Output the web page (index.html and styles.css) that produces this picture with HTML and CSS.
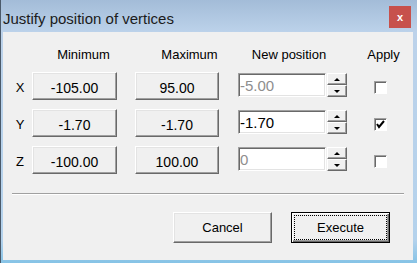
FILE: index.html
```html
<!DOCTYPE html>
<html lang="en">
<head>
    <meta charset="UTF-8">
    <title>Justify position of vertices</title>
    <link rel="stylesheet" href="styles.css">
</head>
<body>

<div class="window">
    <div class="titlebar">
        <span class="title">Justify position of vertices</span>
        <span class="close">x</span>
    </div>
    <div class="panel">
        <div class="grid">
            <span></span>
            <span class="head">Minimum</span>
            <span class="head head-max">Maximum</span>
            <span class="head head-new">New position</span>
            <span class="head head-apply">Apply</span>

            <span class="axis">X</span>
            <button class="value">-105.00</button>
            <button class="value">95.00</button>
            <div class="spin-field">
                <input type="text" value="-5.00" class="dim" disabled>
                <div class="spinner">
                    <span class="spin-btn"><span class="arrow-up"></span></span>
                    <span class="spin-btn"><span class="arrow-down"></span></span>
                </div>
            </div>
            <span class="check"></span>

            <span class="axis">Y</span>
            <button class="value">-1.70</button>
            <button class="value">-1.70</button>
            <div class="spin-field">
                <input type="text" value="-1.70">
                <div class="spinner">
                    <span class="spin-btn"><span class="arrow-up"></span></span>
                    <span class="spin-btn"><span class="arrow-down"></span></span>
                </div>
            </div>
            <span class="check">
                <svg width="11" height="11" viewBox="0 0 11 11"><polyline points="2,5 4,8 9,2" fill="none" stroke="#000" stroke-width="2"/></svg>
            </span>

            <span class="axis">Z</span>
            <button class="value">-100.00</button>
            <button class="value">100.00</button>
            <div class="spin-field">
                <input type="text" value="0" class="dim" disabled>
                <div class="spinner">
                    <span class="spin-btn"><span class="arrow-up"></span></span>
                    <span class="spin-btn"><span class="arrow-down"></span></span>
                </div>
            </div>
            <span class="check"></span>
        </div>

        <hr class="separator">

        <div class="actions">
            <button class="btn">Cancel</button>
            <button class="btn default">Execute</button>
        </div>
    </div>
</div>

</body>
</html>
```

FILE: styles.css
```css
body {
    margin: 0;
    font-family: "Liberation Sans", Arial, sans-serif;
}
.window {
    width: 417px;
    height: 263px;
    box-sizing: border-box;
    border-left: 1px solid #4b5a6a;
    padding: 0 4px 3px 2px;
    background: linear-gradient(#a3bcd8, #bcd2ea 32px, #b4d2ec 240px, #86c3e6);
    display: flex;
    flex-direction: column;
}
.titlebar {
    height: 32px;
    display: flex;
    justify-content: space-between;
    align-items: flex-start;
}
.title {
    font-size: 15px;
    line-height: 18px;
    margin-top: 10px;
    color: #1b1b1b;
}
.close {
    width: 22px;
    height: 22px;
    margin-top: 6px;
    margin-right: 2px;
    background-color: #c7514c;
    color: #fff;
    font-weight: bold;
    font-size: 11px;
    display: flex;
    align-items: center;
    justify-content: center;
}
.panel {
    flex: 1;
    background-color: #f0f0f0;
}
.grid {
    display: grid;
    grid-template-columns: 29px 103px 103px 109px 1fr;
    grid-template-rows: 16px 28px 28px 28px;
    row-gap: 9px;
    padding-top: 15px;
}
.head {
    font-size: 13px;
    line-height: 16px;
    text-align: center;
}
.head-max {
    padding-left: 6px;
}
.head-new {
    padding-right: 7px;
}
.head-apply {
    padding-left: 7px;
}
.axis {
    font-size: 13px;
    padding: 3px 0 0 5px;
    text-align: center;
    align-self: center;
}
.value,
.btn {
    font-family: inherit;
    margin: 0;
    box-sizing: border-box;
    background-color: #f0f0f0;
    color: #000;
    border: 1px solid;
    border-color: #fff #696969 #696969 #fff;
    box-shadow: inset -1px -1px #a0a0a0, inset 1px 1px #e3e3e3;
}
.value {
    width: 85px;
    height: 28px;
    font-size: 14px;
    padding: 4px 0 0;
}
.grid .value:nth-child(5n+3) {
    width: 84px;
}
.spin-field {
    display: flex;
    align-items: flex-start;
    padding-top: 1px;
}
.spin-field input {
    width: 88px;
    height: 24px;
    box-sizing: border-box;
    margin: 0;
    padding: 1px 0 0 1px;
    font-family: inherit;
    font-size: 15px;
    color: #000;
    background-color: #fff;
    border: 1px solid;
    border-color: #a0a0a0 #fff #fff #a0a0a0;
    box-shadow: inset 1px 1px #696969, inset -1px -1px #e3e3e3;
    outline: none;
}
.spin-field input.dim {
    color: #8e8e8e;
}
.spinner {
    display: flex;
    flex-direction: column;
    width: 20px;
    margin-left: 1px;
}
.spin-btn {
    height: 12px;
    box-sizing: border-box;
    border: 1px solid;
    border-color: #fff #696969 #696969 #fff;
    box-shadow: inset -1px -1px #a0a0a0;
    display: flex;
    align-items: center;
    justify-content: center;
}
.arrow-up {
    border-left: 3px solid transparent;
    border-right: 3px solid transparent;
    border-bottom: 3px solid #000;
}
.arrow-down {
    border-left: 3px solid transparent;
    border-right: 3px solid transparent;
    border-top: 3px solid #000;
}
.check {
    width: 13px;
    height: 13px;
    box-sizing: border-box;
    justify-self: center;
    align-self: center;
    margin-top: 3px;
    background-color: #fff;
    border: 1px solid;
    border-color: #a0a0a0 #fff #fff #a0a0a0;
    box-shadow: inset 1px 1px #696969;
    display: flex;
    align-items: center;
    justify-content: center;
}
.separator {
    margin: 19px 9px 0;
    border: 0;
    border-top: 1px solid #a0a0a0;
    border-bottom: 1px solid #fff;
}
.actions {
    display: flex;
    justify-content: flex-end;
    gap: 19px;
    padding: 17px 23px 0 0;
}
.btn {
    width: 99px;
    height: 31px;
    font-size: 13px;
    padding: 0;
}
.btn.default {
    border: 1px solid #000;
    box-shadow: inset 1px 1px #fff, inset -1px -1px #696969, inset -2px -2px #a0a0a0;
    outline: 1px dotted #000;
    outline-offset: -4px;
}
```
